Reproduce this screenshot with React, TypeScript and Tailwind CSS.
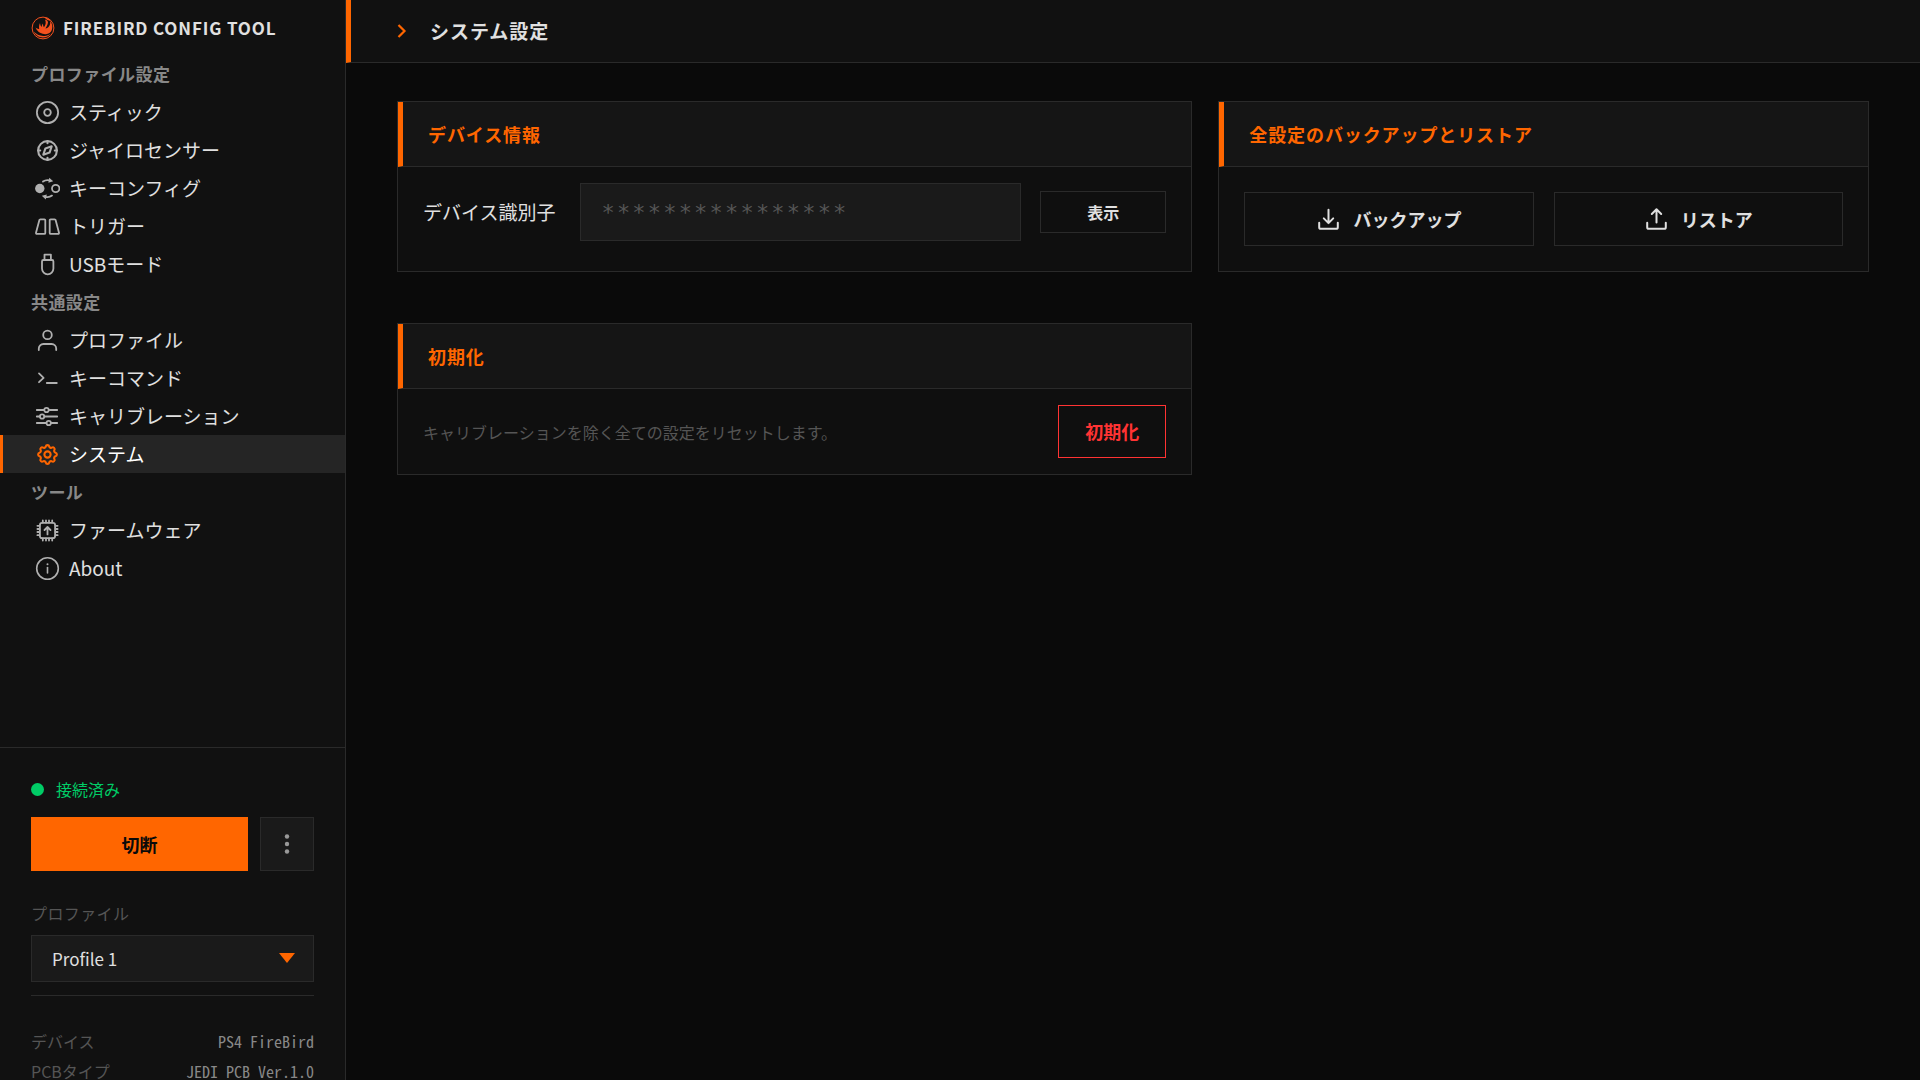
import type { ReactNode } from "react";
import { TbCompass, TbSettings } from "react-icons/tb";
import clsx from "clsx";

function Icon({ children, width = 1.8 }: { children: ReactNode; width?: number }) {
  return (
    <svg
      aria-hidden="true"
      viewBox="0 0 25 25"
      className="size-[25px] shrink-0"
      fill="none"
      stroke="currentColor"
      strokeWidth={width}
      strokeLinecap="round"
      strokeLinejoin="round"
    >
      {children}
    </svg>
  );
}

const icons = {
  stick: (
    <Icon>
      <circle cx="12.5" cy="12.5" r="10.6" />
      <circle cx="12.5" cy="12.5" r="3.3" />
    </Icon>
  ),
  gyro: <TbCompass aria-hidden="true" className="size-[25px] shrink-0" />,
  keyConfig: (
    <Icon>
      <circle cx="4.8" cy="12.5" r="4.7" fill="currentColor" stroke="none" />
      <circle cx="20.7" cy="12.5" r="3.7" />
      <path d="M8 5.6Q11 3.4 14.6 4.4" />
      <path d="M14.2 1.8l4 3.4-4.8 1.6z" fill="currentColor" stroke="none" />
      <path d="M17 19.6Q14 21.8 10.4 20.8" />
      <path d="M10.8 23.4l-4-3.6 5-1.4z" fill="currentColor" stroke="none" />
    </Icon>
  ),
  trigger: (
    <Icon>
      <path d="M5.4 5.3h4a.9.9 0 0 1 .9.9v12.7a1 1 0 0 1-1 1H1.9a.9.9 0 0 1-.9-1.1L4.4 6.1a1 1 0 0 1 1-.8z" />
      <path d="M19.6 5.3h-4a.9.9 0 0 0-.9.9v12.7a1 1 0 0 0 1 1h7.4a.9.9 0 0 0 .9-1.1L20.6 6.1a1 1 0 0 0-1-.8z" />
    </Icon>
  ),
  usb: (
    <Icon>
      <path d="M9.5 8V2.6h6.4V8" />
      <path d="M8.4 8h8.6a1.4 1.4 0 0 1 1.4 1.4v7.2a5.7 5.7 0 0 1-11.4 0V9.4A1.4 1.4 0 0 1 8.4 8z" />
    </Icon>
  ),
  profile: (
    <Icon>
      <circle cx="12.5" cy="6.9" r="4.3" />
      <path d="M3.8 22v-1.4a4.6 4.6 0 0 1 4.6-4.6h8.2a4.6 4.6 0 0 1 4.6 4.6V22" />
    </Icon>
  ),
  command: (
    <Icon>
      <path d="M4 7.4l4.6 4.4L4 16.2M11.8 17h10" />
    </Icon>
  ),
  calibration: (
    <Icon>
      <path d="M1.8 6h7.4M13.8 6h8.4M1.8 12.5h3M9.4 12.5h12.8M1.8 19h9.6M16 19h6.2" />
      <circle cx="11.5" cy="6" r="2.2" />
      <circle cx="7.1" cy="12.5" r="2.2" />
      <circle cx="13.7" cy="19" r="2.2" />
    </Icon>
  ),
  system: <TbSettings aria-hidden="true" className="size-[25px] shrink-0" />,
  firmware: (
    <Icon>
      <rect x="4.9" y="4.9" width="15.2" height="15.2" rx="2.2" />
      <path d="M12.5 16.4V9.2M9.5 12l3-3 3 3" />
      <path d="M7.8 4.5V2.4M11 4.5V2.4M14 4.5V2.4M17.2 4.5V2.4M7.8 22.6v-2.1M11 22.6v-2.1M14 22.6v-2.1M17.2 22.6v-2.1M4.5 7.8H2.4M4.5 11H2.4M4.5 14H2.4M4.5 17.2H2.4M22.6 7.8h-2.1M22.6 11h-2.1M22.6 14h-2.1M22.6 17.2h-2.1" />
    </Icon>
  ),
  about: (
    <Icon width={1.6}>
      <circle cx="12.5" cy="12.5" r="10.8" />
      <path d="M12.5 11.6v5.4" />
      <circle cx="12.5" cy="8.3" r="1" fill="currentColor" stroke="none" />
    </Icon>
  ),
};

const sections = [
  {
    title: "プロファイル設定",
    items: [
      { label: "スティック", icon: icons.stick },
      { label: "ジャイロセンサー", icon: icons.gyro },
      { label: "キーコンフィグ", icon: icons.keyConfig },
      { label: "トリガー", icon: icons.trigger },
      { label: "USBモード", icon: icons.usb },
    ],
  },
  {
    title: "共通設定",
    items: [
      { label: "プロファイル", icon: icons.profile },
      { label: "キーコマンド", icon: icons.command },
      { label: "キャリブレーション", icon: icons.calibration },
      { label: "システム", icon: icons.system, active: true },
    ],
  },
  {
    title: "ツール",
    items: [
      { label: "ファームウェア", icon: icons.firmware },
      { label: "About", icon: icons.about },
    ],
  },
];

const deviceInfo = [
  { label: "デバイス", value: "PS4 FireBird" },
  { label: "PCBタイプ", value: "JEDI PCB Ver.1.0" },
];

function Logo() {
  return (
    <svg aria-hidden="true" viewBox="0 0 24 24" className="size-6 shrink-0" fill="#f4511e">
      <circle cx="12" cy="12" r="10.9" fill="none" stroke="#f4511e" strokeWidth="1" />
      <path d="M14 3.5C17 4.5 17.5 6 16.5 8.5C15.8 10.5 14.8 11.5 14.5 12.5C17.5 12 20 9 19 5C21.5 7.5 22.3 12 20 15.5C17.5 18.8 13 19 9 16.8C7 15.6 5 13.5 4.6 11.6C6 12.8 7 13 8.2 12.9C7.8 11 8 9 9 7C9.2 9 9.8 10.3 10.6 11C10.8 9.5 11.2 8.3 12 7.5C12 9 12.3 10.6 13 11.2C14.6 9 15.4 6.5 14 3.5z" />
      <path d="M13.5 1.5C17 1.7 19 3.4 20 5.2C18 4 16.5 4.3 15.6 3.4z" />
      <path d="M2.6 15.6C7 20.5 14 21.5 20 17.4C16 22.8 7 23.6 2.6 15.6z" />
    </svg>
  );
}

function Sidebar() {
  return (
    <aside className="flex h-screen w-[346px] shrink-0 flex-col overflow-hidden border-r border-[#2a2a2a] bg-[#111]">
      <div className="flex h-[55px] shrink-0 items-center gap-2 px-[31px]">
        <Logo />
        <h1 className="text-[17px] font-bold tracking-wider whitespace-nowrap">FIREBIRD CONFIG TOOL</h1>
      </div>

      <nav className="min-h-0 flex-1">
        {sections.map((section) => (
          <section key={section.title}>
            <h2 className="flex h-[38px] items-center px-[31px] text-[17px] font-bold tracking-wide text-[#888]">
              {section.title}
            </h2>
            <ul>
              {section.items.map((item) => (
                <li key={item.label}>
                  <a
                    href="#"
                    aria-current={item.active ? "page" : undefined}
                    className={clsx(
                      "flex h-[38px] items-center gap-[9px] border-l-[3px] pl-8 text-[19px]",
                      item.active ? "border-[#ff6600] bg-[#252525] text-white" : "border-transparent",
                    )}
                  >
                    <span className={item.active ? "text-[#ff6600]" : "text-[#b0b0b0]"}>{item.icon}</span>
                    {item.label}
                  </a>
                </li>
              ))}
            </ul>
          </section>
        ))}
      </nav>

      <div className="h-[333px] shrink-0 overflow-hidden border-t border-[#2a2a2a] px-[31px] pt-[29px]">
        <div className="flex h-6 items-center gap-3 text-[16px] text-[#00cc66]">
          <span className="size-[13px] rounded-full bg-[#00cc66]" />
          接続済み
        </div>
        <div className="mt-4 flex h-[54px] gap-3">
          <button type="button" className="flex-1 bg-[#ff6600] text-[18px] font-bold text-[#0a0a0a]">
            切断
          </button>
          <button
            type="button"
            aria-label="メニュー"
            className="flex w-[54px] items-center justify-center border border-[#2a2a2a] bg-[#1a1a1a] text-[#999]"
          >
            <svg aria-hidden="true" viewBox="0 0 20 20" className="size-5" fill="currentColor">
              <circle cx="10" cy="2.5" r="2.2" />
              <circle cx="10" cy="10" r="2.2" />
              <circle cx="10" cy="17.5" r="2.2" />
            </svg>
          </button>
        </div>

        <label htmlFor="profile" className="mt-[30px] block text-[16px] leading-6 tracking-wide text-[#555]">
          プロファイル
        </label>
        <div className="relative mt-[10px]">
          <select
            id="profile"
            className="block h-[47px] w-full appearance-none border border-[#2a2a2a] bg-[#1a1a1a] px-5 text-[17px]"
          >
            <option>Profile 1</option>
          </select>
          <svg
            aria-hidden="true"
            viewBox="0 0 16 10"
            className="pointer-events-none absolute top-[18px] right-[19px] h-[10px] w-4"
            fill="#ff6600"
          >
            <path d="M0 0h16L8 10z" />
          </svg>
        </div>

        <dl className="mt-[13px] border-t border-[#2a2a2a] pt-[30px]">
          {deviceInfo.map((row) => (
            <div
              key={row.label}
              className="flex h-[30px] items-center justify-between text-[16px] leading-4 whitespace-nowrap"
            >
              <dt className="text-[#555]">{row.label}</dt>
              <dd className="font-['Noto_Sans_Mono_CJK_JP','Liberation_Mono',monospace] text-[#888]">{row.value}</dd>
            </div>
          ))}
        </dl>
      </div>
    </aside>
  );
}

function Card({ title, children }: { title: string; children: ReactNode }) {
  return (
    <section className="border border-[#2a2a2a] bg-[#0f0f0f]">
      <h3 className="flex h-[65px] items-center border-b border-l-[5px] border-b-[#2a2a2a] border-l-[#ff6600] bg-[#151515] px-[25px] text-[18px] font-bold tracking-wider text-[#ff6600]">
        {title}
      </h3>
      {children}
    </section>
  );
}

function TransferButton({ label, arrow }: { label: string; arrow: string }) {
  return (
    <button
      type="button"
      className="flex h-[54px] flex-1 items-center justify-center gap-3 border border-[#2a2a2a] text-[18px] font-bold"
    >
      <Icon width={2}>
        <path d="M3.2 15.8v4.4a1.6 1.6 0 0 0 1.6 1.6h15.4a1.6 1.6 0 0 0 1.6-1.6v-4.4" />
        <path d={arrow} />
      </Icon>
      {label}
    </button>
  );
}

export default function App() {
  return (
    <div
      lang="ja"
      className="flex h-screen overflow-hidden bg-[#0a0a0a] font-['Noto_Sans_CJK_JP','Noto_Sans',sans-serif] text-[#e0e0e0]"
    >
      <Sidebar />

      <main className="min-w-0 flex-1">
        <header className="flex h-[63px] items-center gap-[18px] border-b border-l-[5px] border-b-[#2a2a2a] border-l-[#ff6600] bg-[#111] pl-[41px]">
          <svg
            aria-hidden="true"
            viewBox="0 0 20 20"
            className="size-5"
            fill="none"
            stroke="#ff6600"
            strokeWidth="2.2"
          >
            <path d="M6.5 4l6 6-6 6" />
          </svg>
          <h2 className="text-[19px] font-bold tracking-wider">システム設定</h2>
        </header>

        <div className="grid grid-cols-[11fr_9fr] gap-x-[26px] gap-y-[51px] px-[51px] pt-[38px]">
          <Card title="デバイス情報">
            <div className="flex items-center px-[25px] pt-4">
              <label htmlFor="device-id" className="text-[19px] whitespace-nowrap">
                デバイス識別子
              </label>
              <input
                id="device-id"
                readOnly
                value="****************"
                className="mr-[19px] ml-[25px] h-[58px] min-w-0 flex-1 border border-[#2a2a2a] bg-[#1a1a1a] px-5 font-['DejaVu_Sans_Mono',monospace] text-[22px] tracking-widest text-[#555]"
              />
              <button type="button" className="h-[42px] w-[126px] border border-[#2a2a2a] text-[16px] font-bold">
                表示
              </button>
            </div>
          </Card>

          <Card title="全設定のバックアップとリストア">
            <div className="flex gap-5 p-[25px]">
              <TransferButton label="バックアップ" arrow="M12.5 2.8v13.2M7.8 11.4l4.7 4.7 4.7-4.7" />
              <TransferButton label="リストア" arrow="M12.5 15.6V2.4M7.8 7l4.7-4.700 4.700 4.700" />
            </div>
          </Card>

          <Card title="初期化">
            <div className="flex items-center justify-between px-[25px] py-4">
              <p className="text-[16px] text-[#555]">キャリブレーションを除く全ての設定をリセットします。</p>
              <button
                type="button"
                className="h-[53px] w-[108px] border border-[#ff3333] text-[18px] font-bold text-[#ff3333]"
              >
                初期化
              </button>
            </div>
          </Card>
        </div>
      </main>
    </div>
  );
}
